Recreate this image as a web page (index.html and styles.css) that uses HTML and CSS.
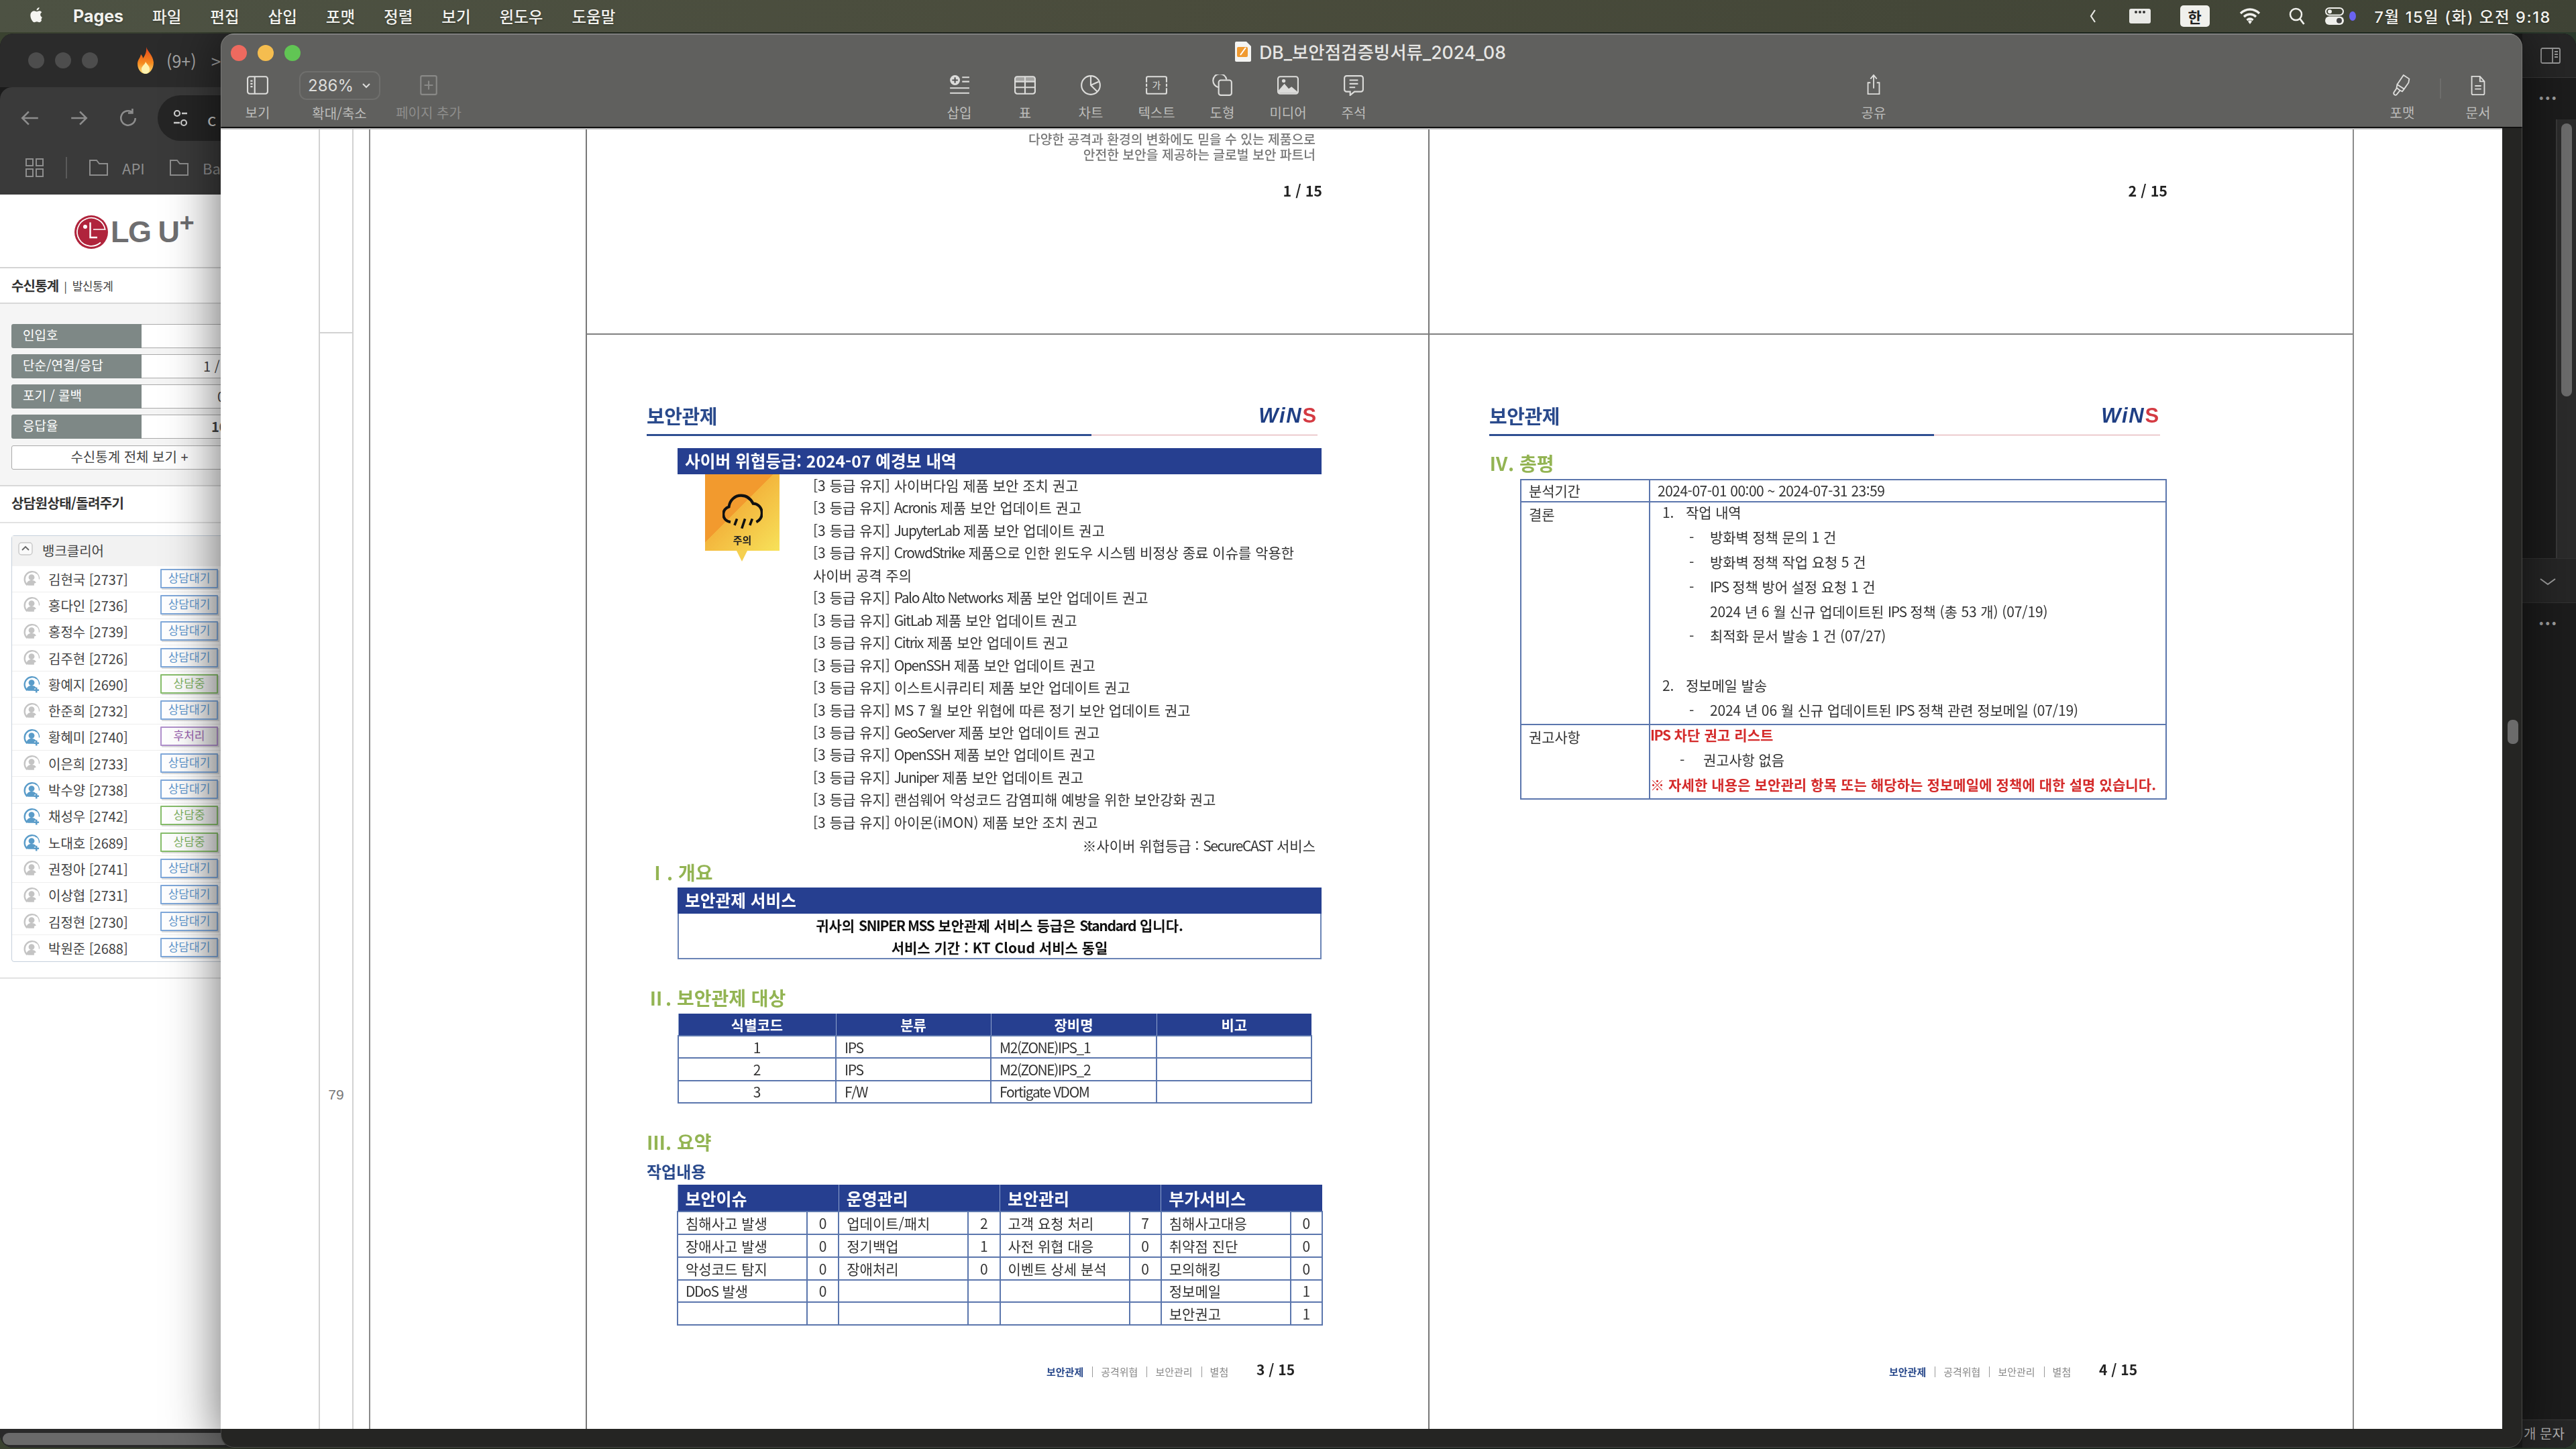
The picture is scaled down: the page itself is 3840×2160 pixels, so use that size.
FILE: index.html
```html
<!DOCTYPE html>
<html lang="ko">
<head>
<meta charset="utf-8">
<title>Pages</title>
<link rel="stylesheet" href="styles.css">
</head>
<body>
<svg class="defs" width="0" height="0">
  <symbol id="agent" viewBox="0 0 28 26">
    <path d="M22 4.500A11.500 11.500 0 1 0 7 22.600" fill="none" stroke="currentColor" stroke-width="2.400"/>
    <path d="M22 4.500a11.500 11.500 0 0 1 3.400 9" fill="none" stroke="currentColor" stroke-width="1.400"/>
    <circle cx="13.500" cy="10.500" r="4.600" fill="currentColor"/>
    <path d="M6 21c0-4 3.500-6 7.500-6s6.500 1.500 7 4l-3 1v3H8z" fill="currentColor"/>
  </symbol>
  <symbol id="agent-on" viewBox="0 0 28 26">
    <use href="#agent"/>
    <path d="M21 18v8M17 22h8" stroke="currentColor" stroke-width="2.600"/>
  </symbol>
</svg>

<div class="desktop">
  <header class="menubar">
    <svg class="apple" viewBox="0 0 24 24"><path d="M18.710 19.500c-.83 1.240-1.710 2.450-3.050 2.470-1.340.03-1.770-.79-3.290-.79-1.530 0-2 .77-3.270.82-1.310.05-2.300-1.320-3.140-2.530C4.250 17 2.940 12.450 4.700 9.390c.87-1.520 2.430-2.480 4.120-2.510 1.280-.02 2.500.87 3.290.87.78 0 2.260-1.070 3.630-.91.57.02 2.170.22 3.200 1.720-.08.06-1.910 1.120-1.890 3.320.03 2.640 2.320 3.520 2.350 3.530-.02.06-.37 1.270-1.210 2.490M13 3.500c.64-.74 1.700-1.300 2.590-1.340.11 1.030-.3 2.060-.92 2.800-.61.74-1.620 1.320-2.610 1.240-.13-1 .36-2.040.94-2.700z"/></svg>
    <b class="app-name">Pages</b>
    <span>파일</span><span>편집</span><span>삽입</span><span>포맷</span><span>정렬</span><span>보기</span><span>윈도우</span><span>도움말</span>
    <div class="status">
      <svg class="st-chev" viewBox="0 0 12 24"><path d="M9 3 3 12l6 9" fill="none" stroke="#e8e8e4" stroke-width="2.200"/></svg>
      <svg class="st-kbd" viewBox="0 0 32 22"><rect width="32" height="22" rx="3" fill="#e9e9e6"/><circle cx="10" cy="5" r="2" fill="#333"/><circle cx="16" cy="5" r="2" fill="#333"/><circle cx="22" cy="5" r="2" fill="#333"/></svg>
      <span class="st-han">한</span>
      <svg class="st-wifi" viewBox="0 0 32 26"><path d="M2 9c8-8 20-8 28 0M7 14c5.500-5 12.500-5 18 0M11.500 19c3-2.500 6-2.500 9 0" fill="none" stroke="#f0f0ec" stroke-width="3.400"/><path d="m13 21 3-2 3 2-3 4z" fill="#f0f0ec"/></svg>
      <svg class="st-search" viewBox="0 0 24 26"><circle cx="10.500" cy="10.500" r="8.500" fill="none" stroke="#f0f0ec" stroke-width="2.500"/><path d="m16.500 17 6 8" stroke="#f0f0ec" stroke-width="2.800"/></svg>
      <svg class="st-cc" viewBox="0 0 28 26"><rect x="1" y="1" width="26" height="10.500" rx="5.200" fill="none" stroke="#f0f0ec" stroke-width="2"/><circle cx="7" cy="6.200" r="3" fill="#f0f0ec"/><rect y="13.500" width="28" height="12.500" rx="6.200" fill="#f0f0ec"/><circle cx="21" cy="19.700" r="4" fill="#444"/></svg>
      <i class="st-dot"></i>
      <span class="st-time">7월 15일 (화) 오전 9:18</span>
    </div>
  </header>

  <section class="browser">
    <div class="b-left">
      <div class="b-tabs">
        <i class="dim-light"></i><i class="dim-light"></i><i class="dim-light"></i>
        <svg class="flame" viewBox="0 0 26 40"><defs><linearGradient id="fl" x1="0" y1="0" x2="0" y2="1"><stop offset="0" stop-color="#e8451c"/><stop offset=".6" stop-color="#f58a1f"/><stop offset="1" stop-color="#ffe27a"/></linearGradient></defs><path d="M14 0c2 7 10 12 11 23 0 10-6 17-12 17S1 34 1 25c0-6 4-8 5-14 2 2 3 4 3 6 3-4 6-10 5-17z" fill="url(#fl)"/><path d="M13 22c2 4 6 6 6 11 0 4-3 7-6 7s-6-3-6-7c0-5 5-6 6-11z" fill="#fff2b0"/></svg>
        <span class="b-tabtext">(9+)</span>
        <span class="b-tabmore">&gt;</span>
      </div>
      <div class="b-tool">
        <svg class="b-ic" viewBox="0 0 28 28"><path d="M25 14H4M12 5l-9 9 9 9" fill="none" stroke="#8d8d8d" stroke-width="2.400"/></svg>
        <svg class="b-ic" viewBox="0 0 28 28"><path d="M3 14h21M15 5l9 9-9 9" fill="none" stroke="#8d8d8d" stroke-width="2.400"/></svg>
        <svg class="b-ic" viewBox="0 0 28 28"><path d="M24 14a10 10 0 1 1-4-8M20 1v6h-6" fill="none" stroke="#8d8d8d" stroke-width="2.400"/></svg>
        <div class="b-pill">
          <svg class="b-tune" viewBox="0 0 24 30"><circle cx="7" cy="8" r="4" fill="none" stroke="#d0d0d0" stroke-width="2.200"/><path d="M14 8h8M2 22h9" stroke="#d0d0d0" stroke-width="2.400"/><circle cx="17" cy="22" r="4" fill="none" stroke="#d0d0d0" stroke-width="2.200"/></svg>
          <span class="b-url">c</span>
        </div>
      </div>
      <div class="b-marks">
        <svg class="b-grid" viewBox="0 0 28 28"><g fill="none" stroke="#8d8d8d" stroke-width="2"><rect x="1" y="1" width="10" height="10"/><rect x="16" y="1" width="10" height="10"/><rect x="1" y="16" width="10" height="11"/><rect x="16" y="16" width="10" height="11"/></g></svg>
        <i class="b-sep"></i>
        <svg class="b-folder" viewBox="0 0 30 26"><path d="M2 24V2h10l4 5h12v17z" fill="none" stroke="#8d8d8d" stroke-width="2"/></svg>
        <span class="b-mark">API</span>
        <svg class="b-folder" viewBox="0 0 30 26"><path d="M2 24V2h10l4 5h12v17z" fill="none" stroke="#8d8d8d" stroke-width="2"/></svg>
        <span class="b-mark">Ba</span>
      </div>
      <div class="sidebar">
        <div class="lg-logo">
          <svg class="lg-mark" viewBox="0 0 50 50"><circle cx="25" cy="25" r="25" fill="#b0243c"/><path d="M39 40.500A21 21 0 1 1 45.700 21H28" fill="none" stroke="#fff" stroke-width="1.700"/><circle cx="16" cy="17" r="3" fill="#fff"/><path d="M23.500 10.500V33h10.500" fill="none" stroke="#fff" stroke-width="2.400"/></svg>
          <span class="lg-name">LG U<sup>+</sup></span>
        </div>
        <div class="stat-tabs"><b>수신통계</b><em>|</em><span>발신통계</span></div>
        <div class="stats">
          <div class="stat"><span class="stat-k">인입호</span><span class="stat-v"></span></div>
          <div class="stat"><span class="stat-k">단순/연결/응답</span><span class="stat-v v1">1 /</span></div>
          <div class="stat"><span class="stat-k">포기 / 콜백</span><span class="stat-v v2">0</span></div>
          <div class="stat"><span class="stat-k">응답율</span><span class="stat-v v3">10</span></div>
          <div class="stat-all">수신통계 전체 보기 +</div>
        </div>
        <h3 class="agent-title">상담원상태/돌려주기</h3>
        <div class="agent-area">
          <div class="group">
            <div class="group-head">
              <svg class="group-btn" viewBox="0 0 22 20"><rect x="1" y="1" width="20" height="18" rx="4" fill="#fafafa" stroke="#c8c8c8" stroke-width="1.400"/><path d="m6 12 5-5 5 5" fill="none" stroke="#666" stroke-width="1.800"/></svg>
              <span>뱅크클리어</span>
            </div>
            <div class="agent"><svg class="av off"><use href="#agent"/></svg><span class="name">김현국 [2737]</span><span class="badge wait">상담대기</span></div>
            <div class="agent"><svg class="av off"><use href="#agent"/></svg><span class="name">홍다인 [2736]</span><span class="badge wait">상담대기</span></div>
            <div class="agent"><svg class="av off"><use href="#agent"/></svg><span class="name">홍정수 [2739]</span><span class="badge wait">상담대기</span></div>
            <div class="agent"><svg class="av off"><use href="#agent"/></svg><span class="name">김주현 [2726]</span><span class="badge wait">상담대기</span></div>
            <div class="agent"><svg class="av on"><use href="#agent-on"/></svg><span class="name">황예지 [2690]</span><span class="badge talk">상담중</span></div>
            <div class="agent"><svg class="av off"><use href="#agent"/></svg><span class="name">한준희 [2732]</span><span class="badge wait">상담대기</span></div>
            <div class="agent"><svg class="av on"><use href="#agent-on"/></svg><span class="name">황혜미 [2740]</span><span class="badge after">후처리</span></div>
            <div class="agent"><svg class="av off"><use href="#agent"/></svg><span class="name">이은희 [2733]</span><span class="badge wait">상담대기</span></div>
            <div class="agent"><svg class="av on"><use href="#agent-on"/></svg><span class="name">박수양 [2738]</span><span class="badge wait">상담대기</span></div>
            <div class="agent"><svg class="av on"><use href="#agent-on"/></svg><span class="name">채성우 [2742]</span><span class="badge talk">상담중</span></div>
            <div class="agent"><svg class="av on"><use href="#agent-on"/></svg><span class="name">노대호 [2689]</span><span class="badge talk">상담중</span></div>
            <div class="agent"><svg class="av off"><use href="#agent"/></svg><span class="name">권정아 [2741]</span><span class="badge wait">상담대기</span></div>
            <div class="agent"><svg class="av off"><use href="#agent"/></svg><span class="name">이상협 [2731]</span><span class="badge wait">상담대기</span></div>
            <div class="agent"><svg class="av off"><use href="#agent"/></svg><span class="name">김정현 [2730]</span><span class="badge wait">상담대기</span></div>
            <div class="agent"><svg class="av off"><use href="#agent"/></svg><span class="name">박원준 [2688]</span><span class="badge wait">상담대기</span></div>
          </div>
        </div>
      </div>
      <div class="b-scroll"><i></i></div>
    </div>
    <div class="b-fill"></div>
    <div class="b-right">
      <div class="br-top"><svg class="br-panel" viewBox="0 0 30 24"><g fill="none" stroke="#9a9a9a" stroke-width="1.800"><rect x="1" y="1" width="28" height="22" rx="2"/><path d="M18 1v22M21 6h5M21 10h5M21 14h5"/></g></svg></div>
      <div class="br-dots">···</div>
      <div class="br-pane"><div class="br-track"><i></i></div></div>
      <div class="br-chev"><svg viewBox="0 0 26 12"><path d="m2 2 11 8 11-8" fill="none" stroke="#a0a0a0" stroke-width="2"/></svg></div>
      <div class="br-dots">···</div>
      <div class="br-rest"></div>
      <div class="br-foot">개 문자</div>
    </div>
  </section>

  <main class="pages">
    <div class="titlebar">
      <div class="lights"><i class="red"></i><i class="yellow"></i><i class="green"></i></div>
      <div class="doc-title">
        <svg class="doc-icon" viewBox="0 0 26 30"><path d="M1 2a2 2 0 0 1 2-2h15l7 7v21a2 2 0 0 1-2 2H3a2 2 0 0 1-2-2z" fill="#f4f4f2"/><rect x="4" y="8" width="16" height="15" rx="2" fill="#f09a30"/><path d="m9 20 8-11" stroke="#fff" stroke-width="2"/></svg>
        <span>DB_보안점검증빙서류_2024_08</span>
      </div>
      <div></div>
    </div>
    <div class="toolbar">
      <div class="tool t-view"><div class="t-ic"><svg viewBox="0 0 30 30"><g fill="none" stroke="#dcdcda" stroke-width="2"><rect x="1" y="3" width="28" height="24" rx="3"/><path d="M11 3v24M5 9h3M5 13h3M5 17h3"/></g></svg></div><span>보기</span></div>
      <div class="tool t-zoom"><div class="t-ic"><div class="zoombox"><span>286%</span><svg viewBox="0 0 14 10"><path d="m2 2 5 5 5-5" fill="none" stroke="#dcdcda" stroke-width="2"/></svg></div></div><span>확대/축소</span></div>
      <div class="tool t-add off-tool"><div class="t-ic"><svg viewBox="0 0 30 30"><g fill="none" stroke="#898987" stroke-width="2"><rect x="4" y="2" width="22" height="26" rx="2"/><path d="M15 9v12M9 15h12"/></g></svg></div><span>페이지 추가</span></div>
      <div class="tool t-first"><div class="t-ic"><svg viewBox="0 0 30 30"><circle cx="9" cy="8" r="7" fill="#dcdcda"/><path d="M9 4v8M5 8h8" stroke="#555" stroke-width="2"/><path d="M19 4h10M19 10h10M2 19h27M2 26h27" stroke="#dcdcda" stroke-width="2"/></svg></div><span>삽입</span></div>
      <div class="tool"><div class="t-ic"><svg viewBox="0 0 30 30"><g fill="none" stroke="#dcdcda" stroke-width="2"><rect x="1" y="3" width="28" height="24" rx="3"/><path d="M1 10h28M1 18h28M15 3v24"/></g><rect x="1" y="3" width="28" height="7" rx="2" fill="#dcdcda" opacity=".55"/></svg></div><span>표</span></div>
      <div class="tool"><div class="t-ic"><svg viewBox="0 0 30 30"><g fill="none" stroke="#dcdcda" stroke-width="2"><circle cx="15" cy="15" r="13"/><path d="M15 2v13l9 9M15 15l11-5"/></g></svg></div><span>차트</span></div>
      <div class="tool"><div class="t-ic"><svg viewBox="0 0 30 30"><g fill="none" stroke="#dcdcda" stroke-width="2"><path d="M1 11V5a2 2 0 0 1 2-2h24a2 2 0 0 1 2 2v6M1 19v6a2 2 0 0 0 2 2h24a2 2 0 0 0 2-2v-6"/></g><path d="M1 13v4M29 13v4" stroke="#dcdcda" stroke-width="2"/><text x="15" y="20" class="ic-text">가</text></svg></div><span>텍스트</span></div>
      <div class="tool"><div class="t-ic"><svg viewBox="0 0 30 30"><g fill="none" stroke="#dcdcda" stroke-width="2"><path d="M10 18A9.500 9.500 0 1 1 21 7"/><rect x="10" y="8" width="18" height="21" rx="3"/></g></svg></div><span>도형</span></div>
      <div class="tool"><div class="t-ic"><svg viewBox="0 0 30 30"><rect x="1" y="3" width="28" height="24" rx="3" fill="none" stroke="#dcdcda" stroke-width="2"/><path d="M2 26v-4l8-9 6 7 4-3 8 7v2z" fill="#dcdcda"/><circle cx="9" cy="9" r="2.500" fill="#dcdcda"/></svg></div><span>미디어</span></div>
      <div class="tool"><div class="t-ic"><svg viewBox="0 0 30 30"><path d="M5 2h20a3 3 0 0 1 3 3v16a3 3 0 0 1-3 3h-9l-6 5v-5H5a3 3 0 0 1-3-3V5a3 3 0 0 1 3-3zM9 8h12M9 13h12M9 18h8" fill="none" stroke="#dcdcda" stroke-width="2"/></svg></div><span>주석</span></div>
      <div class="tool t-share"><div class="t-ic"><svg viewBox="0 0 30 34"><path d="M10 13H6v18h18V13h-4M15 22V2M10 7l5-6 5 6" fill="none" stroke="#dcdcda" stroke-width="2"/></svg></div><span>공유</span></div>
      <div class="tool t-format"><div class="t-ic"><svg viewBox="0 0 34 34"><path d="m19 1 9 6-1 6-7 10-11-7 6-9zM9 16l11 7-3 4-4-2-5-4zM8 22l-4 6c-2 3 2 6 4 4l5-6" fill="none" stroke="#dcdcda" stroke-width="2"/></svg></div><span>포맷</span></div>
      <i class="t-div"></i>
      <div class="tool t-doc"><div class="t-ic"><svg viewBox="0 0 30 34"><path d="M5 3h13l7 8v19a2 2 0 0 1-2 2H7a2 2 0 0 1-2-2zM18 3v8h7M10 18h10M10 23h10" fill="none" stroke="#dcdcda" stroke-width="2"/></svg></div><span>문서</span></div>
    </div>

    <div class="workspace">
      <div class="canvas">
        <div class="gut-a"></div>
        <div class="gut-b"><div class="gut-b-top"></div><div class="gut-b-num">79</div></div>
        <div class="gut-c"></div>
        <div class="gut-d"></div>
        <div class="spread">
          <section class="page top">
            <div class="soft">
              <p class="motto">다양한 공격과 환경의 변화에도 믿을 수 있는 제품으로<br>안전한 보안을 제공하는 글로벌 보안 파트너</p>
              <p class="pno">1 / 15</p>
            </div>
          </section>
          <section class="page top">
            <div class="soft"><p class="pno blank">2 / 15</p></div>
          </section>

          <section class="page sheet">
            <div class="soft col">
              <div class="doc-head"><h1>보안관제</h1><span class="wins">WiN<u>S</u></span></div>
              <div class="rule"><i></i><b></b></div>
              <h2 class="bar">사이버 위협등급: 2024-07 예경보 내역</h2>
              <div class="alert">
                <div class="alert-mark">
                  <div class="alert-card">
                    <svg viewBox="0 0 50 50"><path d="M10 36c-6-1-9-5-9-10 0-4 3-8 7-9 1-8 7-14 15-14 7 0 12 4 15 10 6 0 11 5 11 12 0 5-3 9-7 11" fill="none" stroke="#111" stroke-width="3.400"/><path d="m15 40 3-8M24 44l4-12M34 40l3-8" stroke="#111" stroke-width="3"/></svg>
                    <b>주의</b>
                  </div>
                </div>
                <ul class="alert-list">
                  <li>[3 등급 유지] 사이버다임 제품 보안 조치 권고</li>
                  <li>[3 등급 유지] <i class="la">Acronis</i> 제품 보안 업데이트 권고</li>
                  <li>[3 등급 유지] <i class="la">JupyterLab</i> 제품 보안 업데이트 권고</li>
                  <li>[3 등급 유지] <i class="la">CrowdStrike</i> 제품으로 인한 윈도우 시스템 비정상 종료 이슈를 악용한<br>사이버 공격 주의</li>
                  <li>[3 등급 유지] <i class="la">Palo Alto Networks</i> 제품 보안 업데이트 권고</li>
                  <li>[3 등급 유지] <i class="la">GitLab</i> 제품 보안 업데이트 권고</li>
                  <li>[3 등급 유지] <i class="la">Citrix</i> 제품 보안 업데이트 권고</li>
                  <li>[3 등급 유지] <i class="la">OpenSSH</i> 제품 보안 업데이트 권고</li>
                  <li>[3 등급 유지] 이스트시큐리티 제품 보안 업데이트 권고</li>
                  <li>[3 등급 유지] MS 7 월 보안 위협에 따른 정기 보안 업데이트 권고</li>
                  <li>[3 등급 유지] <i class="la">GeoServer</i> 제품 보안 업데이트 권고</li>
                  <li>[3 등급 유지] <i class="la">OpenSSH</i> 제품 보안 업데이트 권고</li>
                  <li>[3 등급 유지] <i class="la">Juniper</i> 제품 보안 업데이트 권고</li>
                  <li>[3 등급 유지] 랜섬웨어 악성코드 감염피해 예방을 위한 보안강화 권고</li>
                  <li>[3 등급 유지] 아이몬(iMON) 제품 보안 조치 권고</li>
                </ul>
              </div>
              <p class="source">※사이버 위협등급 : <i class="la">SecureCAST</i> 서비스</p>

              <h3 class="sec sec-1">Ⅰ. 개요</h3>
              <h2 class="bar bar-svc">보안관제 서비스</h2>
              <div class="svc-box"><p>귀사의 <i class="la">SNIPER MSS</i> 보안관제 서비스 등급은 <i class="la">Standard</i> 입니다.</p><p>서비스 기간 : KT Cloud 서비스 동일</p></div>

              <h3 class="sec sec-2">Ⅱ. 보안관제 대상</h3>
              <table class="target">
                <thead><tr><th class="c-a">식별코드</th><th class="c-b">분류</th><th class="c-c">장비명</th><th class="c-d">비고</th></tr></thead>
                <tbody>
                  <tr><td class="ctr">1</td><td><i class="la">IPS</i></td><td><i class="la">M2(ZONE)IPS_1</i></td><td></td></tr>
                  <tr><td class="ctr">2</td><td><i class="la">IPS</i></td><td><i class="la">M2(ZONE)IPS_2</i></td><td></td></tr>
                  <tr><td class="ctr">3</td><td><i class="la">F/W</i></td><td><i class="la">Fortigate VDOM</i></td><td></td></tr>
                </tbody>
              </table>

              <h3 class="sec sec-3">Ⅲ. 요약</h3>
              <h4 class="work">작업내용</h4>
              <table class="summary">
                <colgroup><col class="ck"><col class="cn"><col class="ck"><col class="cn"><col class="ck"><col class="cn"><col class="ck"><col class="cn"></colgroup>
                <thead><tr><th colspan="2">보안이슈</th><th colspan="2">운영관리</th><th colspan="2">보안관리</th><th colspan="2">부가서비스</th></tr></thead>
                <tbody>
                  <tr><td class="k">침해사고 발생</td><td class="n">0</td><td class="k">업데이트/패치</td><td class="n">2</td><td class="k">고객 요청 처리</td><td class="n">7</td><td class="k">침해사고대응</td><td class="n">0</td></tr>
                  <tr><td class="k">장애사고 발생</td><td class="n">0</td><td class="k">정기백업</td><td class="n">1</td><td class="k">사전 위협 대응</td><td class="n">0</td><td class="k">취약점 진단</td><td class="n">0</td></tr>
                  <tr><td class="k">악성코드 탐지</td><td class="n">0</td><td class="k">장애처리</td><td class="n">0</td><td class="k">이벤트 상세 분석</td><td class="n">0</td><td class="k">모의해킹</td><td class="n">0</td></tr>
                  <tr><td class="k"><i class="la">DDoS</i> 발생</td><td class="n">0</td><td class="k"></td><td class="n"></td><td class="k"></td><td class="n"></td><td class="k">정보메일</td><td class="n">1</td></tr>
                  <tr><td class="k"></td><td class="n"></td><td class="k"></td><td class="n"></td><td class="k"></td><td class="n"></td><td class="k">보안권고</td><td class="n">1</td></tr>
                </tbody>
              </table>
              <footer class="doc-foot"><nav><b>보안관제</b><span>공격위협</span><span>보안관리</span><span>별첨</span></nav><strong>3 / 15</strong></footer>
            </div>
          </section>

          <section class="page sheet">
            <div class="soft col">
              <div class="doc-head"><h1>보안관제</h1><span class="wins">WiN<u>S</u></span></div>
              <div class="rule"><i></i><b></b></div>
              <h3 class="sec sec-4">Ⅳ. 총평</h3>
              <table class="review">
                <tr class="r1"><th>분석기간</th><td>2024-07-01 00:00 ~ 2024-07-31 23:59</td></tr>
                <tr class="r2"><th>결론</th><td>
                  <p class="num"><span>1.</span>작업 내역</p>
                  <p class="dash"><span>-</span>방화벽 정책 문의 1 건</p>
                  <p class="dash"><span>-</span>방화벽 정책 작업 요청 5 건</p>
                  <p class="dash"><span>-</span><i class="la">IPS</i> 정책 방어 설정 요청 1 건</p>
                  <p class="dash"><span></span>2024 년 6 월 신규 업데이트된 <i class="la">IPS</i> 정책 (총 53 개) (07/19)</p>
                  <p class="dash"><span>-</span>최적화 문서 발송 1 건 (07/27)</p>
                  <p class="gap"></p>
                  <p class="num"><span>2.</span>정보메일 발송</p>
                  <p class="dash"><span>-</span>2024 년 06 월 신규 업데이트된 <i class="la">IPS</i> 정책 관련 정보메일 (07/19)</p>
                </td></tr>
                <tr class="r3"><th>권고사항</th><td>
                  <p class="warn"><i class="la">IPS</i> 차단 권고 리스트</p>
                  <p class="dash2"><span>-</span>권고사항 없음</p>
                  <p class="warn">※ 자세한 내용은 보안관리 항목 또는 해당하는 정보메일에 정책에 대한 설명 있습니다.</p>
                </td></tr>
              </table>
              <footer class="doc-foot"><nav><b>보안관제</b><span>공격위협</span><span>보안관리</span><span>별첨</span></nav><strong>4 / 15</strong></footer>
            </div>
          </section>
        </div>
        <div class="gut-e"></div>
      </div>
      <div class="vscroll"><i></i></div>
    </div>
    <div class="hgutter"></div>
  </main>
</div>
</body>
</html>
```
FILE: styles.css
```css
* { box-sizing: border-box; }
html, body { margin: 0; padding: 0; }
body { width: 3840px; height: 2160px; overflow: hidden; font-family: "Noto Sans CJK KR", "Noto Sans", sans-serif; }
.defs { position: absolute; }
p, h1, h2, h3, h4, ul { margin: 0; padding: 0; }
ul { list-style: none; }
i, em, u { font-style: normal; text-decoration: none; }

.desktop { position: relative; width: 3840px; height: 2160px; overflow: hidden; background: linear-gradient(90deg, #3a4230, #27302a 50%, #2b3a2c); }

/* menu bar */
.menubar { position: relative; z-index: 3; height: 48px; display: flex; align-items: center; gap: 43px; padding: 0 37px 0 41px; background: linear-gradient(90deg, #4d5243, #4a4c3c 45%, #3f4335); color: #f2f2ee; font-size: 23.5px; font-weight: 500; text-shadow: 0 1px 3px rgba(0,0,0,.35); }
.apple { width: 27px; height: 30px; fill: #f4f4f0; margin-top: -4px; }
.app-name { font-family: Inter, sans-serif; font-weight: 700; font-size: 25px; margin-left: -2px; }
.status { margin-left: auto; display: flex; align-items: center; }
.st-chev { width: 12px; height: 24px; }
.st-kbd { width: 32px; height: 22px; margin-left: 48px; }
.st-han { width: 44px; height: 32px; margin-left: 44px; border-radius: 5px; background: #f0f0ec; color: #222; font-size: 22px; font-weight: 700; display: flex; align-items: center; justify-content: center; text-shadow: none; }
.st-wifi { width: 32px; height: 26px; margin-left: 44px; }
.st-search { width: 24px; height: 26px; margin-left: 42px; }
.st-cc { width: 28px; height: 26px; margin-left: 30px; }
.st-dot { width: 10px; height: 14px; margin-left: 8px; border-radius: 50%; background: #6a63f0; }
.st-time { margin-left: 28px; font-family: Inter, "Noto Sans CJK KR", sans-serif; font-weight: 500; white-space: nowrap; letter-spacing: 1.600px; }

/* background browser */
.browser { position: absolute; left: 0; top: 50px; width: 3840px; height: 2108px; display: flex; background: #1b1b1b; border-radius: 20px; overflow: hidden; }
.b-left { width: 386px; display: flex; flex-direction: column; flex: none; }
.b-tabs { height: 80px; background: #2b2b2b; display: flex; align-items: center; padding-left: 42px; gap: 16px; white-space: nowrap; }
.dim-light { width: 24px; height: 24px; flex: none; border-radius: 50%; background: #4d4d4d; }
.flame { width: 26px; height: 40px; margin-left: 42px; flex: none; }
.b-tabtext { color: #a5a5a5; font-size: 25px; margin-left: 2px; }
.b-tabmore { color: #a5a5a5; font-size: 26px; margin-left: 6px; }
.b-tool { height: 80px; background: #3a3a3a; border-radius: 18px 0 0 0; display: flex; align-items: center; padding: 12px 0 0 30px; gap: 43px; }
.b-ic { width: 30px; height: 30px; }
.b-pill { height: 68px; flex: 1; margin-left: -14px; background: #252525; border-radius: 34px 0 0 34px; display: flex; align-items: center; padding-left: 22px; gap: 28px; }
.b-tune { width: 24px; height: 30px; }
.b-url { color: #c8c8c8; font-size: 26px; }
.b-marks { height: 80px; background: #3a3a3a; display: flex; align-items: center; padding-left: 38px; }
.b-grid { width: 28px; height: 28px; }
.b-sep { width: 2px; height: 32px; background: #5a5a5a; margin: 0 32px; }
.b-folder { width: 30px; height: 26px; }
.b-mark { color: #8d8d8d; font-size: 22px; margin: 0 32px 0 20px; width: 38px; }
.sidebar { flex: 1; min-height: 0; background: #fff; display: flex; flex-direction: column; color: #333; overflow: hidden; }
.lg-logo { height: 110px; flex: none; border-bottom: 2px solid #d4d4d4; display: flex; align-items: center; padding: 3px 0 0 111px; gap: 4px; }
.lg-mark { width: 50px; height: 50px; }
.lg-name { font-family: "Liberation Sans", sans-serif; font-weight: 700; font-size: 45px; letter-spacing: -1.500px; color: #6e6e70; line-height: 50px; white-space: nowrap; }
.lg-name sup { font-size: 38px; line-height: 0; vertical-align: 16px; margin-left: 1px; }
.stat-tabs { height: 53px; flex: none; display: flex; align-items: center; padding-left: 17px; border-bottom: 2px solid #d8d8d8; }
.stat-tabs b { font-size: 20px; letter-spacing: -.8px; }
.stat-tabs em { font-size: 16px; margin: 0 8px; }
.stat-tabs span { font-size: 17px; letter-spacing: -.5px; color: #444; }
.stats { height: 272px; flex: none; background: #f5f5f5; padding: 30px 17px 0; display: flex; flex-direction: column; gap: 9px; border-bottom: 2px solid #d8d8d8; }
.stat { height: 36px; display: flex; flex: none; }
.stat-k { width: 194px; background: #7e8886; color: #fff; border-radius: 3px 0 0 3px; padding-left: 17px; font-size: 19px; line-height: 32px; white-space: nowrap; }
.stat-v { flex: 1; background: #fff; border: 1px solid #aaa; border-left: 0; font-size: 20px; line-height: 33px; color: #444; white-space: nowrap; }
.v1 { padding-left: 92px; }
.v2 { padding-left: 113px; }
.v3 { padding-left: 104px; font-weight: 700; }
.stat-all { height: 36px; flex: none; margin-top: 1px; background: #fff; border: 1px solid #aaa; border-radius: 3px; text-align: center; font-size: 20px; line-height: 32px; color: #444; }
.agent-title { height: 55px; flex: none; font-size: 20px; line-height: 50px; letter-spacing: -.6px; padding-left: 17px; border-bottom: 2px solid #e2e2e2; font-weight: 700; color: #333; }
.agent-area { height: 679px; flex: none; padding: 18px 0 0 17px; background: #fff; border-bottom: 2px solid #e2e2e2; }
.group { border: 1px solid #c5d0dc; border-radius: 4px; margin-right: -5px; }
.group-head { height: 45px; background: #f2f2f2; display: flex; align-items: center; padding: 0 0 3px 9px; gap: 14px; font-size: 20px; color: #444; }
.group-btn { width: 22px; height: 20px; margin-top: -5px; }
.agent { height: 39.300px; display: flex; align-items: center; padding-left: 16px; border-bottom: 1px solid #eee; }
.agent:last-child { border-bottom: 0; }
.av { width: 27px; height: 26px; flex: none; }
.av.off { color: #c4c4c4; }
.av.on { color: #5a9cc9; }
.name { width: 167px; margin-left: 11px; font-size: 20px; color: #444; white-space: nowrap; }
.badge { width: 86px; height: 29px; flex: none; margin-top: -2px; border: 2px solid; border-radius: 1px; text-align: center; font-size: 17px; line-height: 21px; white-space: nowrap; background: linear-gradient(90deg, #fff 40%, #e2e2e2); box-shadow: 2px 2px 0 rgba(120,120,120,.25); }
.wait { border-color: #7fa8da; color: #5f97ce; }
.talk { border-color: #86bd6a; color: #7fb364; }
.after { border-color: #b090cc; color: #9a64b0; }
.b-scroll { height: 28px; flex: none; background: #2a2a2a; padding: 6px 0 4px 4px; }
.b-scroll i { display: block; width: 340px; height: 18px; border-radius: 9px; background: #6a6a6a; }
.b-fill { flex: 1; }
.b-right { width: 80px; flex: none; display: flex; flex-direction: column; background: #1c1c1c; }
.br-top { height: 66px; flex: none; background: #262626; border-bottom: 1px solid #3a3a3a; display: flex; align-items: center; justify-content: flex-end; padding-right: 23px; }
.br-panel { width: 30px; height: 24px; }
.br-dots { height: 62px; flex: none; color: #a0a0a0; font-size: 26px; font-weight: 700; line-height: 58px; padding-left: 24px; letter-spacing: 1px; }
.br-pane { height: 654px; flex: none; padding-left: 50px; }
.br-track { height: 654px; background: #2b2b2b; border-left: 2px solid #3a3a3a; padding: 6px 6px 0 6px; }
.br-track i { display: block; width: 16px; height: 407px; border-radius: 8px; background: #6c6c6c; }
.br-chev { height: 67px; flex: none; background: #262626; border-top: 1px solid #333; border-bottom: 1px solid #333; display: flex; align-items: center; padding: 2px 0 0 25px; }
.br-chev svg { width: 26px; height: 12px; }
.br-rest { flex: 1; }
.br-foot { height: 42px; flex: none; background: #262626; border-top: 1px solid #3a3a3a; color: #b0b0b0; font-size: 20px; padding-left: 2px; line-height: 40px; white-space: nowrap; }

/* Pages window */
.pages { position: absolute; left: 329px; top: 50px; z-index: 2; width: 3431px; height: 2108px; border-radius: 20px; overflow: hidden; background: #252523; box-shadow: 0 0 80px rgba(0,0,0,.6); outline: 1px solid rgba(255,255,255,.16); outline-offset: -1px; display: flex; flex-direction: column; }
.titlebar { height: 56px; flex: none; display: grid; grid-template-columns: 1fr auto 1fr; align-items: center; background: #60605e; border-top: 2px solid #777; padding-bottom: 5px; }
.lights { display: flex; gap: 16px; padding: 5px 0 0 15px; }
.lights i { width: 24px; height: 24px; border-radius: 50%; }
.red { background: #ee6a5f; }
.yellow { background: #f5bd4f; }
.green { background: #61c554; }
.doc-title { display: flex; align-items: center; gap: 11px; color: #e6e6e4; font-family: Inter, "Noto Sans CJK KR", sans-serif; font-size: 26.500px; font-weight: 500; white-space: nowrap; margin-left: -4px; }
.doc-icon { width: 26px; height: 30px; }
.toolbar { height: 85px; flex: none; display: flex; padding-left: 20px; background: #60605e; border-bottom: 2px solid #101010; }
.tool { width: 98px; flex: none; display: flex; flex-direction: column; align-items: center; color: #bdbdbb; font-size: 20px; white-space: nowrap; }
.t-ic { height: 43px; width: 100%; display: flex; align-items: center; justify-content: center; }
.t-ic > svg { width: 32px; height: 32px; }
.tool > span { height: 41px; line-height: 40px; }
.t-view { width: 70px; }
.t-zoom { width: 174px; }
.t-add { width: 92px; color: #8e8e8c; }
.zoombox { width: 121px; height: 43px; margin-left: 0; border: 2px solid #6f6f6d; border-radius: 11px; display: flex; align-items: center; justify-content: center; gap: 12px; color: #dcdcda; font-family: Inter, sans-serif; font-size: 24px; }
.zoombox svg { width: 14px; height: 10px; }
.t-first { margin-left: 696px; }
.t-share { margin-left: 677px; }
.t-format { margin-left: 690px; }
.t-div { width: 2px; height: 30px; margin: 11px 6px 0 7px; background: #6d6d6b; }
.ic-text { font-size: 13px; fill: #dcdcda; text-anchor: middle; font-family: "Noto Sans CJK KR", sans-serif; }

.workspace { flex: 1; min-height: 0; display: flex; }
.canvas { width: 3401px; height: 1939px; flex: none; display: flex; background: #fff; border-top: 2px solid #bdbdbd; overflow: hidden; }
.gut-a { width: 146px; flex: none; }
.gut-b { width: 52px; flex: none; border-left: 2px solid #d2d2d2; border-right: 2px solid #d2d2d2; }
.gut-b-top { height: 304px; border-bottom: 2px solid #d2d2d2; }
.gut-b-num { padding-top: 1121px; text-align: center; color: #777; font-size: 21px; line-height: 28px; font-family: "Liberation Sans", sans-serif; }
.gut-c { width: 23px; flex: none; }
.gut-d { width: 323px; flex: none; border-left: 2px solid #8a8a8a; }
.spread { width: 2634px; flex: none; display: grid; grid-template-columns: 1256px 1378px; grid-template-rows: 304px 1633px; }
.gut-e { flex: 1; border-left: 2px solid #8a8a8a; }
.vscroll { flex: 1; padding: 882px 0 0 8px; }
.vscroll i { display: block; width: 16px; height: 36px; border-radius: 7px; background: #6b6b6b; }
.hgutter { height: 28px; flex: none; }

/* document */
.soft { filter: blur(.55px); }
.la { letter-spacing: -1.400px; }
.page { border-left: 2px solid #777; color: #2a2a2a; }
.page.top { padding-top: 3px; border-bottom: 0; }
.motto { padding: 0 168px 0 0; text-align: right; color: #777; font-size: 19.300px; font-weight: 500; line-height: 22.500px; }
.pno { padding: 30px 158px 0 0; text-align: right; color: #222; font-size: 21.500px; font-weight: 700; line-height: 26px; }
.pno.blank { padding: 75px 276px 0 0; }
.sheet { border-top: 2px solid #808080; height: 1633px; padding: 95px 0 0 89px; overflow: hidden; }
.col { display: flex; flex-direction: column; height: 100%; }
.doc-head { width: 1000px; height: 50px; flex: none; display: flex; align-items: center; justify-content: space-between; }
.doc-head h1 { font-size: 29px; font-weight: 700; color: #2a4a8c; letter-spacing: -.4px; line-height: 50px; }
.wins { font-family: "Liberation Sans", sans-serif; font-style: italic; font-weight: 700; font-size: 31px; color: #1f3f84; letter-spacing: 1.800px; line-height: 30px; padding-top: 2px; }
.wins u { color: #d43a42; }
.rule { width: 1000px; height: 3px; flex: none; margin-top: 3px; display: flex; align-items: center; }
.rule i { width: 663px; height: 3px; background: #2f4f92; }
.rule b { flex: 1; height: 1.500px; background: #dda0a4; }
.bar { width: 960px; height: 39px; flex: none; margin: 18px 0 0 46px; padding-left: 11px; background: #263f90; color: #fff; font-size: 24.700px; font-weight: 700; line-height: 37px; white-space: nowrap; }
.alert { display: flex; margin-left: 47px; width: 959px; flex: none; height: 536px; }
.alert-mark { width: 201px; flex: none; padding-left: 40px; }
.alert-card { position: relative; width: 111px; height: 114px; background: linear-gradient(135deg, #f29a2e 0 45%, #f3b63d 45%, #f7e25a 100%); display: flex; flex-direction: column; align-items: center; padding-top: 28px; }
.alert-card::after { content: ""; position: absolute; left: 47px; top: 114px; border: 8px solid transparent; border-top: 16px solid #f5d050; border-bottom: 0; }
.alert-card svg { width: 60px; height: 60px; }
.alert-card b { font-size: 15px; line-height: 20px; margin-top: 0; color: #222; }
.alert-list { width: 750px; font-size: 21px; line-height: 33.450px; color: #333; white-space: nowrap; }
.source { width: 950px; height: 34px; flex: none; margin-left: 47px; text-align: right; font-size: 21px; line-height: 34px; color: #333; white-space: nowrap; }
.sec { height: 36px; flex: none; color: #93b453; font-size: 28px; font-weight: 700; line-height: 36px; white-space: nowrap; }
.sec-1 { margin-top: 5px; padding-left: 2px; }
.bar-svc { margin-top: 5px; }
.svc-box { width: 960px; height: 68px; flex: none; margin-left: 46px; border: 2px solid #6b84b6; border-top: 0; text-align: center; font-size: 21px; line-height: 33px; color: #111; font-weight: 600; padding-top: 1px; }
.sec-2 { margin-top: 39px; }
table { border-collapse: collapse; table-layout: fixed; flex: none; }
.target { width: 944px; margin: 6px 0 0 46px; font-size: 21px; color: #333; }
.target th { background: #263f90; color: #fff; font-weight: 700; height: 33px; padding: 0; border-left: 1px solid #8fa3cc; line-height: 28px; vertical-align: middle; }
.target td { height: 33.400px; padding: 0 0 0 12px; border: 2px solid #5b76ad; line-height: 28px; }
.target td.ctr { text-align: center; padding: 0; }
.c-a { width: 235px; } .c-b { width: 231px; } .c-c { width: 247px; } .c-d { width: 231px; }
.sec-3 { margin-top: 39px; }
.work { height: 36px; flex: none; margin-top: 8px; color: #2a4a8c; font-size: 24px; font-weight: 700; line-height: 36px; }
.summary { width: 961px; margin: 2px 0 0 45px; font-size: 21px; color: #333; }
.ck { width: 193px; }
.cn { width: 47.250px; }
.summary th { height: 40px; background: #263f90; color: #fff; font-size: 25px; font-weight: 700; text-align: left; padding: 0 0 0 11px; border-left: 1px solid #8fa3cc; line-height: 30px; }
.summary td { height: 33.800px; border: 2px solid #5b76ad; line-height: 28px; padding: 0; white-space: nowrap; }
.summary .k { padding-left: 11px; }
.summary .n { text-align: center; }
.doc-foot { margin-top: auto; height: 35px; flex: none; margin-bottom: 72px; margin-left: 596px; display: flex; align-items: center; }
.doc-foot nav { display: flex; align-items: center; gap: 26px; font-size: 15px; color: #888; width: 313px; padding-top: 8px; white-space: nowrap; }
.doc-foot nav b { color: #2a4a8c; }
.doc-foot nav span { position: relative; }
.doc-foot nav span::before { content: ""; position: absolute; left: -13px; top: 3px; height: 16px; width: 1px; background: #999; }
.doc-foot strong { font-size: 21px; color: #222; font-weight: 700; white-space: nowrap; }
.sec-4 { margin-top: 22px; }
.review { width: 962px; margin: 6px 0 0 46px; font-size: 21px; color: #333; border: 2px solid #5b76ad; letter-spacing: -.12px; }
.review th, .review td { border: 2px solid #5b76ad; vertical-align: top; padding: 0; font-weight: 400; text-align: left; }
.review th { width: 192px; padding-left: 11px; line-height: 34px; }
.review td { width: 770px; line-height: 36.900px; white-space: nowrap; }
.review td p { height: 36.900px; }
.review td p:first-child { margin-top: -4px; }
.r1 td, .r1 th { height: 33px; line-height: 31px; vertical-align: middle; }
.r1 td { padding-left: 11px; letter-spacing: -.5px; }
.r2 td { height: 332px; }
.r3 td { height: 111px; }
.num span { display: inline-block; width: 35px; margin-left: 18px; }
.dash span { display: inline-block; width: 31px; margin-left: 58px; }
.warn { color: #d42b2b; font-weight: 700; letter-spacing: .1px; }
.dash2 span { display: inline-block; width: 35px; margin-left: 44px; }
```
